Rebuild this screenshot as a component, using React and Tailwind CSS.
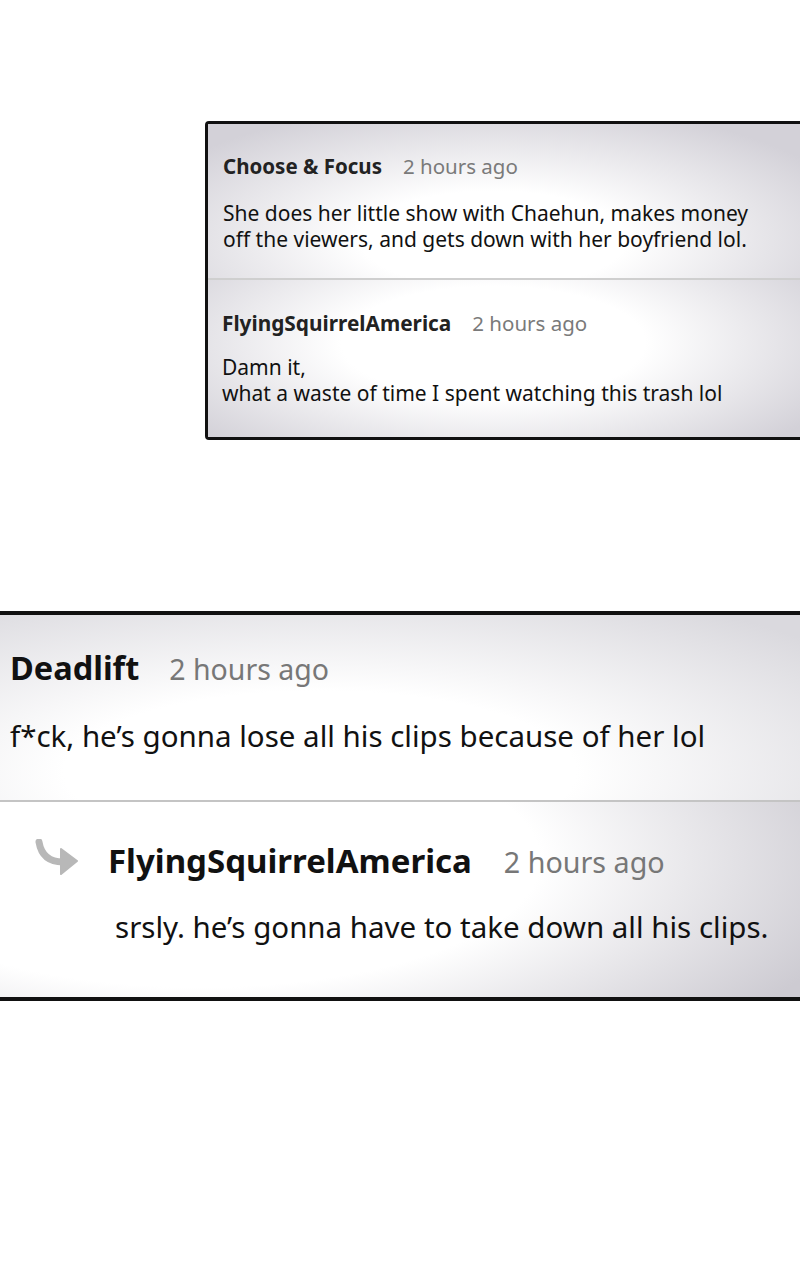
const font = { fontFamily: '"Noto Sans", "Open Sans", sans-serif' }

const ReplyArrow = () => (
  <svg width="44" height="36" viewBox="0 0 44 36" className="shrink-0">
    <path d="M4 3 C6 15 13 23 28 23" fill="none" stroke="#b8b8b8" strokeWidth="7" strokeLinecap="round" />
    <polygon points="26,10 42,22 26,35" fill="#b8b8b8" strokeLinejoin="round" stroke="#b8b8b8" strokeWidth="2" />
  </svg>
)

const App = () => {
  return (
    <div className="w-[800px] h-[1280px] bg-white overflow-hidden" style={font}>
      <div className="pt-[121px] pl-[205px]">
        <div className="w-[640px] border-[3px] border-[#111] rounded-[4px] overflow-hidden">
          <div className="bg-[radial-gradient(ellipse_60%_90%_at_45%_75%,#ffffff_35%,#d3d1d8_100%)] pl-[15px] pt-[28px] pb-[26px]">
            <div className="flex items-baseline gap-[21px] leading-[28px]">
              <span className="text-[20.5px] font-bold text-[#222]">Choose &amp; Focus</span>
              <span className="text-[20.5px] text-[#7a7a7a]">2 hours ago</span>
            </div>
            <p className="mt-[20px] text-[21px] leading-[26px] text-[#111]">
              She does her little show with Chaehun, makes money<br />
              off the viewers, and gets down with her boyfriend lol.
            </p>
          </div>
          <div className="h-[2px] bg-[#cfcfcf]" />
          <div className="bg-[radial-gradient(ellipse_60%_90%_at_45%_40%,#ffffff_40%,#d3d1d8_100%)] pl-[14px] pt-[29px] pb-[31px]">
            <div className="flex items-baseline gap-[21px] leading-[28px]">
              <span className="text-[20.8px] font-bold text-[#222]">FlyingSquirrelAmerica</span>
              <span className="text-[20.5px] text-[#7a7a7a]">2 hours ago</span>
            </div>
            <p className="mt-[17px] text-[21px] leading-[26px] text-[#111]">
              Damn it,<br />
              what a waste of time I spent watching this trash lol
            </p>
          </div>
        </div>
      </div>

      <div className="mt-[171px] border-y-4 border-[#111]">
        <div className="bg-[radial-gradient(ellipse_80%_110%_at_40%_85%,#ffffff_40%,#dad9de_100%)] pl-[10px] pt-[33px] pb-[44px]">
          <div className="flex items-baseline gap-[30px] leading-[40px]">
            <span className="text-[32.5px] font-bold text-[#111]">Deadlift</span>
            <span className="text-[28.5px] text-[#777]">2 hours ago</span>
          </div>
          <p className="mt-[27px] text-[29.5px] leading-[40px] text-[#111]">f*ck, he’s gonna lose all his clips because of her lol</p>
        </div>
        <div className="h-[2px] bg-[#c4c4c4]" />
        <div className="bg-[radial-gradient(ellipse_85%_130%_at_25%_30%,#ffffff_50%,#cdcbd2_100%)] pl-[35px] pt-[37px] pb-[50px]">
          <div className="flex items-start">
            <ReplyArrow />
            <div className="ml-[29px] flex items-baseline gap-[32px] leading-[44px]">
              <span className="text-[33px] font-bold text-[#111]">FlyingSquirrelAmerica</span>
              <span className="text-[28.7px] text-[#777]">2 hours ago</span>
            </div>
          </div>
          <p className="ml-[80px] mt-[23px] text-[29.5px] leading-[40px] text-[#111]">srsly. he’s gonna have to take down all his clips.</p>
        </div>
      </div>
    </div>
  )
}

export default App
